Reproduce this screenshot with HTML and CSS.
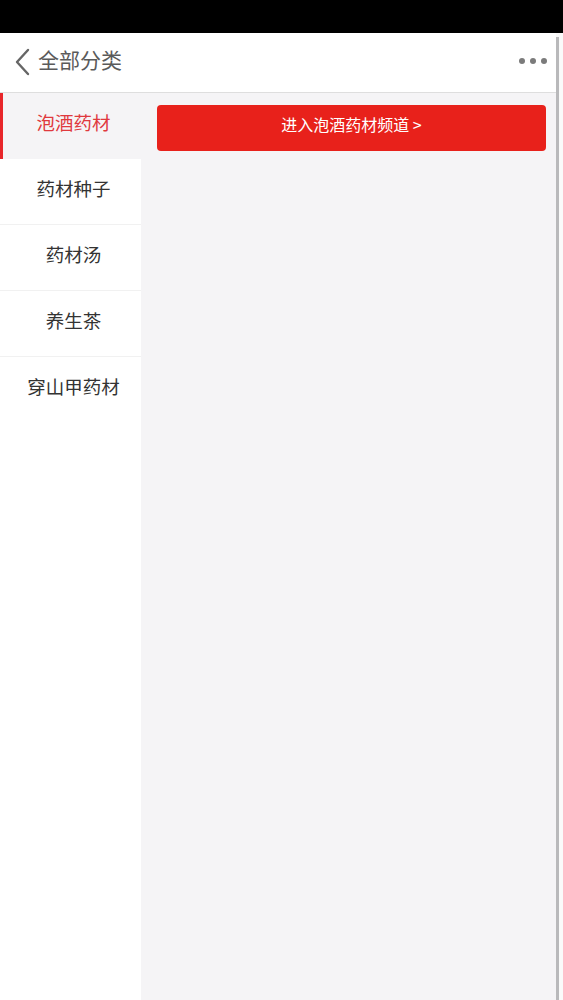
FILE: index.html
```html
<!DOCTYPE html>
<html lang="zh">
<head>
<meta charset="utf-8">
<title>全部分类</title>
<link rel="stylesheet" href="styles.css">
</head>
<body>
<div class="statusbar"></div>
<div class="frame">
  <div class="app">
    <header class="topbar">
      <div class="back">
        <svg class="chev" width="18" height="30" viewBox="0 0 18 30"><path d="M15 3 L4 15 L15 27" fill="none" stroke="#666" stroke-width="2.4" stroke-linecap="round" stroke-linejoin="round"/></svg>
        <span class="title">全部分类</span>
      </div>
      <div class="more"><i></i><i></i><i></i></div>
    </header>
    <div class="body">
      <nav class="side">
        <div class="item active">泡酒药材</div>
        <div class="item">药材种子</div>
        <div class="item">药材汤</div>
        <div class="item">养生茶</div>
        <div class="item last">穿山甲药材</div>
      </nav>
      <main class="content">
        <a class="enter">进入泡酒药材频道 &gt;</a>
      </main>
    </div>
  </div>
  <div class="gutter"><span class="bar"></span></div>
</div>
</body>
</html>
```
FILE: styles.css
```css
html, body {
  margin: 0;
  padding: 0;
  height: 100%;
}
body {
  font-family: "Noto Sans CJK SC", "Noto Sans", sans-serif;
  background: #fff;
  display: flex;
  flex-direction: column;
  overflow: hidden;
}
.statusbar {
  height: 33px;
  background: #000;
  flex: none;
}
.frame {
  flex: 1;
  display: flex;
  min-height: 0;
}
.app {
  flex: 1;
  display: flex;
  flex-direction: column;
}
.gutter {
  width: 7px;
  background: #fafafa;
  display: flex;
  padding-top: 4px;
}
.bar {
  width: 3px;
  background: #b9b9bb;
}
.topbar {
  height: 59px;
  background: #fff;
  border-bottom: 1px solid #dedede;
  display: flex;
  align-items: center;
  justify-content: space-between;
  padding: 0 9px 6px 13px;
  box-sizing: border-box;
  height: 60px;
  flex: none;
}
.back {
  display: flex;
  align-items: center;
  gap: 7px;
}
.chev {
  display: block;
  margin-top: 4px;
}
.title {
  font-size: 21px;
  color: #5a5a5a;
  line-height: 1;
}
.more {
  display: flex;
  gap: 5px;
  margin-top: 3px;
}
.more i {
  width: 6px;
  height: 6px;
  border-radius: 50%;
  background: #7b7b7b;
}
.body {
  flex: 1;
  display: flex;
  min-height: 0;
}
.side {
  width: 141px;
  background: #fff;
  flex: none;
}
.item {
  height: 66px;
  box-sizing: border-box;
  display: flex;
  align-items: center;
  justify-content: center;
  font-size: 18.5px;
  color: #333;
  border-bottom: 1px solid #f1f1f1;
  background: #fff;
  padding: 0 0 8px 6px;
}
.item.last {
  border-bottom: none;
}
.item.active {
  background: #f5f4f6;
  color: #e0393e;
  border-left: 3px solid #e8262a;
  border-bottom: none;
  padding-left: 3px;
}
.content {
  flex: 1;
  background: #f5f4f6;
  padding: 12px 10px 0 16px;
}
.enter {
  display: flex;
  align-items: center;
  justify-content: center;
  height: 46px;
  border-radius: 4px;
  background: #e8211b;
  color: #fff;
  font-size: 16px;
  padding-bottom: 8px;
  box-sizing: border-box;
}
```
